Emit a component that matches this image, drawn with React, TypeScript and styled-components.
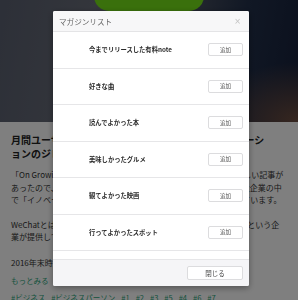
import styled, { createGlobalStyle } from "styled-components";

const GlobalStyle = createGlobalStyle`
  body {
    margin: 0;
    background: #ffffff;
    font-family: "Noto Sans CJK JP", "Noto Sans", sans-serif;
    overflow: hidden;
  }
`;

const Page = styled.div`
  width: 298px;
  height: 300px;
  overflow: hidden;
`;

const Hero = styled.div`
  height: 122px;
  display: flex;
  justify-content: center;
  background:
    radial-gradient(ellipse 90px 60px at 100% 100%, #6e4e40 0%, rgba(110, 78, 64, 0) 100%),
    linear-gradient(100deg, #5a6070 0%, #686c78 30%, #525764 55%, #22304a 78%, #16203a 100%);
`;

const PillButton = styled.div`
  width: 110px;
  height: 30px;
  margin-top: -19px;
  border-radius: 15px;
  background: #74e018;
`;

const Article = styled.article`
  padding: 0 11px;
  color: #333333;
`;

const Title = styled.h1`
  margin: 11px 0 0;
  font-size: 10px;
  line-height: 14px;
  font-weight: 700;
  color: #222222;
  white-space: nowrap;
`;

const Paragraph = styled.p<{ $gap: number }>`
  margin: ${(p) => p.$gap}px 0 0;
  font-size: 8px;
  line-height: 12.5px;
  white-space: nowrap;
`;

const MoreLink = styled.a`
  display: block;
  margin-top: 6px;
  font-size: 7.5px;
  line-height: 12px;
  color: #2aa57a;
  text-decoration: none;
`;

const Tags = styled.div`
  display: flex;
  gap: 6px;
  margin-top: 5px;
  font-size: 7.5px;
  line-height: 12px;
  color: #2aa57a;
`;

const Overlay = styled.div`
  position: fixed;
  inset: 0;
  background: rgba(0, 0, 0, 0.5);
`;

const Modal = styled.div`
  position: fixed;
  top: 11px;
  left: 53px;
  width: 196px;
  background: #ffffff;
  border-radius: 2px;
  box-shadow: 0 2px 6px rgba(0, 0, 0, 0.35);
  overflow: hidden;
`;

const ModalHeader = styled.div`
  box-sizing: border-box;
  height: 21px;
  display: flex;
  align-items: center;
  justify-content: space-between;
  padding: 0 8px 0 6px;
  background: #f7f7f8;
  border-bottom: 1px solid #e4e4e6;
`;

const ModalTitle = styled.span`
  font-size: 7.6px;
  color: #666666;
`;

const CloseX = styled.span`
  font-size: 8px;
  color: #c2c2c2;
  font-family: "DejaVu Sans", sans-serif;
`;

const List = styled.div`
  padding-bottom: 8px;
`;

const Row = styled.div`
  box-sizing: border-box;
  height: 36.5px;
  display: flex;
  align-items: center;
  justify-content: space-between;
  padding: 0 6px 0 36px;
  border-bottom: 1px solid #e6e6e8;
`;

const RowName = styled.span`
  font-size: 6.3px;
  font-weight: 700;
  color: #2a2a2a;
`;

const SmallButton = styled.button`
  box-sizing: border-box;
  width: 35px;
  height: 13px;
  padding: 0;
  display: flex;
  align-items: center;
  justify-content: center;
  background: #ffffff;
  border: 1px solid #dcdcde;
  border-radius: 2px;
  font-family: inherit;
  font-size: 5.5px;
  color: #555555;
`;

const ModalFooter = styled.div`
  box-sizing: border-box;
  height: 27px;
  display: flex;
  align-items: center;
  justify-content: flex-end;
  padding: 0 6px;
  background: #f5f5f7;
  border-top: 1px solid #e6e6e8;
`;

const CloseButton = styled(SmallButton)`
  width: 56px;
  height: 14px;
  font-size: 6.5px;
  color: #444444;
`;

const magazines = [
  "今までリリースした有料note",
  "好きな曲",
  "読んでよかった本",
  "美味しかったグルメ",
  "観てよかった映画",
  "行ってよかったスポット",
];

const tags = ["#ビジネス", "#ビジネスパーソン", "#1", "#2", "#3", "#5", "#4", "#6", "#7"];

export default function App() {
  return (
    <>
      <GlobalStyle />
      <Page>
        <Hero>
          <PillButton />
        </Hero>
        <Article>
          <Title>
            月間ユーザー8億人WeChatに学ぶ中国企業のイノベーシ
            <br />
            ョンのジレンマの乗り越え方
          </Title>
          <Paragraph $gap={8}>
            「On Growing」という海外ブログに、WeChatについての素晴らしい記事が
            <br />
            あったので、その一部を翻訳して紹介します。中国を代表する巨大企業の中
            <br />
            で「イノベーション」を起こし続けるための秘訣について書かれています。
          </Paragraph>
          <Paragraph $gap={12}>
            WeChatとは、中国で最も人気のメッセージアプリで、テンセントという企
            <br />
            業が提供しているサービスです。
          </Paragraph>
          <Paragraph $gap={13}>2016年末時点で、月間ユーザー数は8億人を突破。</Paragraph>
          <MoreLink href="#">もっとみる</MoreLink>
          <Tags>
            {tags.map((t) => (
              <span key={t}>{t}</span>
            ))}
          </Tags>
        </Article>
        <Overlay />
        <Modal>
          <ModalHeader>
            <ModalTitle>マガジンリスト</ModalTitle>
            <CloseX>×</CloseX>
          </ModalHeader>
          <List>
            {magazines.map((m) => (
              <Row key={m}>
                <RowName>{m}</RowName>
                <SmallButton>追加</SmallButton>
              </Row>
            ))}
          </List>
          <ModalFooter>
            <CloseButton>閉じる</CloseButton>
          </ModalFooter>
        </Modal>
      </Page>
    </>
  );
}
